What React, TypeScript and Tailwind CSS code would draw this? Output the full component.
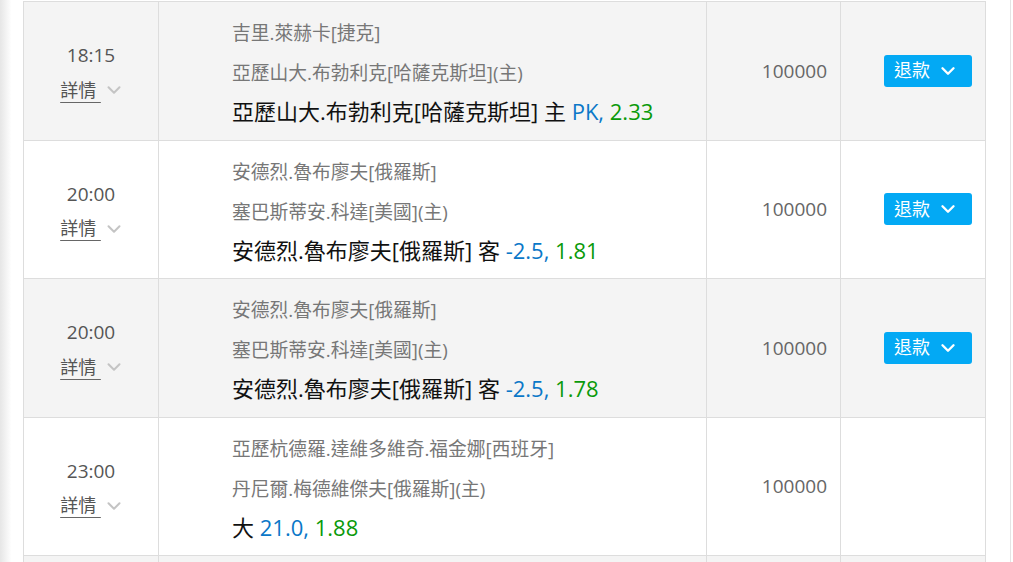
import { ChevronDown } from "lucide-react";

type Bet = {
  time: string;
  player1: string;
  player2: string;
  pick: string;
  side?: string;
  line: string;
  odds: string;
  stake: string;
  refund: boolean;
};

const bets: Bet[] = [
  {
    time: "18:15",
    player1: "吉里.萊赫卡[捷克]",
    player2: "亞歷山大.布勃利克[哈薩克斯坦](主)",
    pick: "亞歷山大.布勃利克[哈薩克斯坦]",
    side: "主",
    line: "PK",
    odds: "2.33",
    stake: "100000",
    refund: true,
  },
  {
    time: "20:00",
    player1: "安德烈.魯布廖夫[俄羅斯]",
    player2: "塞巴斯蒂安.科達[美國](主)",
    pick: "安德烈.魯布廖夫[俄羅斯]",
    side: "客",
    line: "-2.5",
    odds: "1.81",
    stake: "100000",
    refund: true,
  },
  {
    time: "20:00",
    player1: "安德烈.魯布廖夫[俄羅斯]",
    player2: "塞巴斯蒂安.科達[美國](主)",
    pick: "安德烈.魯布廖夫[俄羅斯]",
    side: "客",
    line: "-2.5",
    odds: "1.78",
    stake: "100000",
    refund: true,
  },
  {
    time: "23:00",
    player1: "亞歷杭德羅.達維多維奇.福金娜[西班牙]",
    player2: "丹尼爾.梅德維傑夫[俄羅斯](主)",
    pick: "大",
    line: "21.0",
    odds: "1.88",
    stake: "100000",
    refund: false,
  },
];

function BetRow({ bet, shaded }: { bet: Bet; shaded: boolean }) {
  const bg = shaded ? "bg-[#f4f4f4]" : "bg-white";
  return (
    <div className={`grid grid-cols-[135px_548px_134px_145px] h-[138.5px] border-b border-[#dddddd] ${bg}`}>
      {/* time + details */}
      <div className="flex flex-col items-center pt-[35px] border-r border-[#dddddd]">
        <div className="text-[19px] leading-[36px] text-[#555]">{bet.time}</div>
        <div className="flex items-center h-[34px] pl-[3px]">
          <span className="text-[18px] text-[#555] underline underline-offset-[5px] decoration-[#666]">詳情&nbsp;</span>
          <ChevronDown className="w-[22px] h-[22px] ml-[2px] text-[#c4c4c4]" strokeWidth={2.2} />
        </div>
      </div>

      {/* match */}
      <div className="pl-[73px] pt-[11px] border-r border-[#dddddd]">
        <div className="text-[18.75px] leading-[40px] text-[#777]">{bet.player1}</div>
        <div className="text-[18.75px] leading-[40px] text-[#777]">{bet.player2}</div>
        <div className="text-[22px] leading-[36px] text-[#111]">
          {bet.pick} {bet.side && <>{bet.side} </>}
          <span className="text-[#0a78c8]">{bet.line}, </span>
          <span className="text-[#0a9a0a]">{bet.odds}</span>
        </div>
      </div>

      {/* stake */}
      <div className="flex items-center justify-end pr-[13px] border-r border-[#dddddd]">
        <span className="text-[19px] text-[#666]">{bet.stake}</span>
      </div>

      {/* action */}
      <div className="flex items-center justify-end pr-[14px]">
        {bet.refund && (
          <button className="flex items-center w-[88px] h-[32px] pl-[10px] rounded-[3px] bg-[#03a9f4] text-white text-[18px]">
            退款
            <ChevronDown className="w-[22px] h-[22px] ml-[7px]" strokeWidth={2.6} />
          </button>
        )}
      </div>
    </div>
  );
}

export default function App() {
  return (
    <div
      className="flex w-[1013px] h-[562px] overflow-hidden bg-white"
      style={{ fontFamily: '"Open Sans", "Noto Sans CJK TC", sans-serif' }}
    >
      <div className="w-[23px] shrink-0 bg-gradient-to-r from-[#e6e6e6] via-white to-white" />
      <div className="w-[963px] shrink-0 pt-[1px]">
        <div className="border-l border-r border-t border-[#dddddd]">
          {bets.map((bet, i) => (
            <BetRow key={i} bet={bet} shaded={i % 2 === 0} />
          ))}
          <div className="h-[20px] bg-[#f4f4f4] grid grid-cols-[135px_548px_134px_145px]">
            <div className="border-r border-[#dddddd]" />
            <div className="border-r border-[#dddddd]" />
            <div className="border-r border-[#dddddd]" />
            <div />
          </div>
        </div>
      </div>
      <div className="w-[24px] shrink-0" />
      <div className="flex-1 border-l border-[#e4e4e4] bg-white" />
    </div>
  );
}
